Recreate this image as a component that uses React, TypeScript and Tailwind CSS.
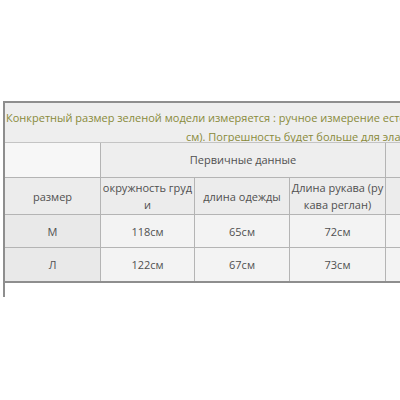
import React from "react";

const F = { fontFamily: '"Open Sans", "Noto Sans", sans-serif' };

function Cell({ w, bg, children, last }: { w: string; bg: string; children?: React.ReactNode; last?: boolean }) {
  return (
    <div className={`${w} ${bg} ${last ? "" : "border-r border-[#b4b4b4]"} flex shrink-0 flex-col items-center justify-center text-center leading-[17px] whitespace-nowrap`}>
      {children}
    </div>
  );
}

export default function App() {
  return (
    <div className="w-[400px] h-[400px] bg-white overflow-hidden text-[11px] text-[#505050]" style={F}>
      <div className="pt-[101px] pl-[3px]">
        <div className="border-l-2 border-[#8e8e8e] h-[196px] w-[397px]">
          <div className="border-t-2 border-b-2 border-[#8e8e8e]">
            <div className="h-[40px] bg-[#eeeeee] border-b border-[#c4c4c4] overflow-hidden text-[#898a3a] leading-[19px] pt-[5px] text-[11px]">
              <div className="whitespace-nowrap pl-[1px]">Конкретный размер зеленой модели измеряется : ручное измерение естественной</div>
              <div className="whitespace-nowrap pl-[181px]">см). Погрешность будет больше для эластичных тканей</div>
            </div>
            <div className="flex h-[35px] border-b border-[#b4b4b4]">
              <Cell w="w-[96px]" bg="bg-[#f7f7f7]" />
              <div className="w-[285px] shrink-0 bg-[#eeeeee] border-r border-[#b4b4b4] flex items-center justify-center">
                Первичные данные
              </div>
              <Cell w="w-[20px]" bg="bg-[#eeeeee]" last />
            </div>
            <div className="flex h-[37px] border-b border-[#b4b4b4]">
              <Cell w="w-[96px]" bg="bg-[#ececec]">размер</Cell>
              <Cell w="w-[94px]" bg="bg-[#ececec]">
                <span>окружность груд</span>
                <span>и</span>
              </Cell>
              <Cell w="w-[95px]" bg="bg-[#ececec]">длина одежды</Cell>
              <Cell w="w-[96px]" bg="bg-[#ececec]">
                <span>Длина рукава (ру</span>
                <span>кава реглан)</span>
              </Cell>
              <Cell w="w-[20px]" bg="bg-[#ececec]" last />
            </div>
            <div className="flex h-[33px] border-b border-[#b4b4b4]">
              <Cell w="w-[96px]" bg="bg-[#e9e9e9]">М</Cell>
              <Cell w="w-[94px]" bg="bg-[#f3f3f3]">118см</Cell>
              <Cell w="w-[95px]" bg="bg-[#f3f3f3]">65см</Cell>
              <Cell w="w-[96px]" bg="bg-[#f3f3f3]">72см</Cell>
              <Cell w="w-[20px]" bg="bg-[#f3f3f3]" last />
            </div>
            <div className="flex h-[33px]">
              <Cell w="w-[96px]" bg="bg-[#e9e9e9]">Л</Cell>
              <Cell w="w-[94px]" bg="bg-[#f3f3f3]">122см</Cell>
              <Cell w="w-[95px]" bg="bg-[#f3f3f3]">67см</Cell>
              <Cell w="w-[96px]" bg="bg-[#f3f3f3]">73см</Cell>
              <Cell w="w-[20px]" bg="bg-[#f3f3f3]" last />
            </div>
          </div>
        </div>
      </div>
    </div>
  );
}
